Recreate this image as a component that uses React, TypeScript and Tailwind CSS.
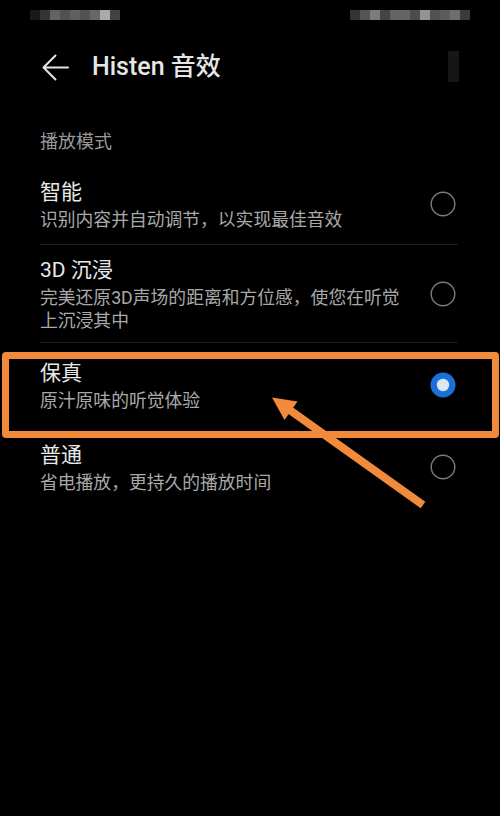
import React from 'react'

const FONT = { fontFamily: 'Roboto, "Noto Sans CJK SC", sans-serif' }

// pixelated status bar (blurred out in the screenshot)
const LEFT_MOSAIC = ['#1c1c1c', '#3a3a3a', '#6e6e6e', '#5a5a5a', '#6a6a6a', '#5c5c5c', '#737373', '#bdbdbd', '#4a4a4a']
const RIGHT_MOSAIC = ['#3a3a3a', '#5e5e5e', '#8a8a8a', '#4c4c4c', '#6f6f6f', '#6f6f6f', '#555555', '#a3a3a3', '#5a5a5a', '#666666', '#7a7a7a', '#424242']

type Mode = {
  title: string
  desc: string
  rowClass: string
  selected?: boolean
}

// row heights follow the screenshot (the two-line item is taller)
const MODES: Mode[] = [
  { title: '智能', desc: '识别内容并自动调节，以实现最佳音效', rowClass: 'h-[81px] border-b border-[#1f1f1f]' },
  { title: '3D 沉浸', desc: '完美还原3D声场的距离和方位感，使您在听觉上沉浸其中', rowClass: 'h-[98px] border-b border-[#1f1f1f]' },
  { title: '保真', desc: '原汁原味的听觉体验', rowClass: 'h-[82px] pt-[2px]', selected: true },
  { title: '普通', desc: '省电播放，更持久的播放时间', rowClass: 'h-[82px] pt-[2px]' },
]

function Radio({ checked }: { checked?: boolean }) {
  return (
    <svg width="28" height="28" viewBox="0 0 28 28" aria-hidden="true">
      {checked ? (
        <>
          <circle cx="13" cy="14" r="12.5" fill="#1c6fd8" />
          <circle cx="13" cy="14" r="6.2" fill="#dde7f3" />
        </>
      ) : (
        <circle cx="13" cy="14" r="11.8" fill="none" stroke="#7c7c7c" strokeWidth="1.4" />
      )}
    </svg>
  )
}

function BackArrow() {
  return (
    <svg width="28" height="28" viewBox="0 0 28 28" aria-hidden="true">
      <path d="M27 14.5H3M14.5 2.5L2.5 14.5l12 12" fill="none" stroke="#e4e4e4" strokeWidth="2" strokeLinecap="round" strokeLinejoin="round" />
    </svg>
  )
}

export default function App() {
  return (
    <div className="relative h-[816px] w-[500px] overflow-hidden bg-black" style={FONT}>
      {/* status bar */}
      <div className="flex h-10 items-start justify-between pt-[10px] pl-[30px] pr-[30px]">
        <div className="flex h-[10px] opacity-90 blur-[0.6px]">
          {LEFT_MOSAIC.map((c, i) => (
            <div key={i} className="h-full w-[10px]" style={{ backgroundColor: c }} />
          ))}
        </div>
        <div className="flex h-[10px] opacity-90 blur-[0.6px]">
          {RIGHT_MOSAIC.map((c, i) => (
            <div key={i} className="h-full w-[10px]" style={{ backgroundColor: c }} />
          ))}
        </div>
      </div>

      {/* toolbar */}
      <div className="flex h-[53px] items-center pl-[41px] pr-[41px]">
        <BackArrow />
        <h1 className="ml-[23px] text-[25px] leading-[30px] font-medium text-[#e6e6e6]">Histen 音效</h1>
        <div className="ml-auto h-[31px] w-[11px] bg-[#161616]" />
      </div>

      {/* section */}
      <div className="pt-[37px] pl-[40px] pr-[42px]">
        <div className="text-[18px] leading-[24px] text-[#9a9a9a]">播放模式</div>
        <div className="mt-[10px]">
          {MODES.map((m) => (
            <div key={m.title} className={`flex items-center ${m.rowClass}`}>
              <div className="w-[370px]">
                <div className="text-[21px] leading-[31px] text-[#e8e8e8]">{m.title}</div>
                <div className="text-[17.8px] leading-[23.5px] text-[#a9a9a9]">{m.desc}</div>
              </div>
              <div className="ml-auto">
                <Radio checked={m.selected} />
              </div>
            </div>
          ))}
        </div>
      </div>

      {/* annotation: highlight box */}
      <div className="absolute left-[2px] top-[352px] h-[86px] w-[497px] rounded-[4px] border-[7px] border-[#f28a3c]" />

      {/* annotation: arrow */}
      <svg className="pointer-events-none absolute left-0 top-0" width="500" height="816" aria-hidden="true">
        <line x1="423" y1="505" x2="289" y2="409.5" stroke="#f28a3c" strokeWidth="8" />
        <polygon points="272,397.5 297.5,401.5 284.5,420" fill="#f28a3c" />
      </svg>
    </div>
  )
}
